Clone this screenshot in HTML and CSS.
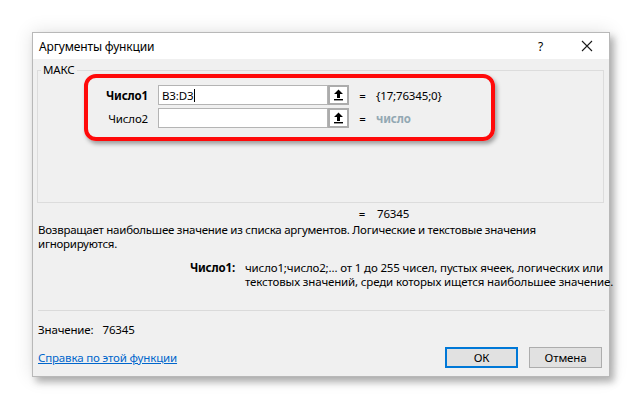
FILE: index.html
```html
<!DOCTYPE html>
<html lang="ru">
<head>
<meta charset="utf-8">
<title>Аргументы функции</title>
<link rel="stylesheet" href="styles.css">
</head>
<body>
<div class="stage">
  <div class="dialog">
    <div class="titlebar">
      <span class="title">Аргументы функции</span>
      <span class="help">?</span>
      <svg class="close" width="12" height="12" viewBox="0 0 12 12"><path d="M1 1L11 11M11 1L1 11" stroke="#1a1a1a" stroke-width="1.1" fill="none"/></svg>
    </div>
    <div class="content">
      <fieldset class="group">
        <legend>МАКС</legend>
        <div class="args">
          <div class="arg">
            <span class="arg-label bold">Число1</span>
            <span class="input"><span class="input-text">B3:D3</span><span class="caret"></span></span>
            <span class="ref-btn"><svg width="11" height="12" viewBox="0 0 11 12"><path d="M5.5 0.5L10 5H7V9H4V5H1Z" fill="#000"/><rect x="1" y="10" width="9" height="1.4" fill="#000"/></svg></span>
            <span class="eq">=</span>
            <span class="arg-value">{17;76345;0}</span>
          </div>
          <div class="arg">
            <span class="arg-label">Число2</span>
            <span class="input"></span>
            <span class="ref-btn"><svg width="11" height="12" viewBox="0 0 11 12"><path d="M5.5 0.5L10 5H7V9H4V5H1Z" fill="#000"/><rect x="1" y="10" width="9" height="1.4" fill="#000"/></svg></span>
            <span class="eq">=</span>
            <span class="arg-value hint">число</span>
          </div>
        </div>
        <div class="highlight"></div>
      </fieldset>
      <div class="result"><span class="eq">=</span><span class="result-num">76345</span></div>
      <p class="desc">Возвращает наибольшее значение из списка аргументов. Логические и текстовые значения<br>игнорируются.</p>
      <div class="argdesc">
        <span class="bold">Число1:</span>
        <span class="argdesc-text">число1;число2;... от 1 до 255 чисел, пустых ячеек, логических или<br>текстовых значений, среди которых ищется наибольшее значение.</span>
      </div>
      <div class="sep"></div>
      <div class="value">Значение:<span class="value-num">76345</span></div>
      <div class="footer">
        <a class="link" href="#">Справка по этой функции</a>
        <div class="buttons">
          <button class="btn btn-default">ОК</button>
          <button class="btn">Отмена</button>
        </div>
      </div>
    </div>
  </div>
</div>
</body>
</html>
```
FILE: styles.css
```css
* { box-sizing: border-box; }
html, body { margin: 0; padding: 0; background: #fff; }
body {
  width: 642px; height: 409px; overflow: hidden;
  font-family: "Noto Sans", "Liberation Sans", sans-serif;
  font-size: 11.5px; letter-spacing: -0.15px; color: #000;
}
.stage { padding: 32px 0 0 32px; }
.dialog {
  width: 578px; height: 345px;
  background: #f0f0f0;
  border: 1px solid #b8b8b8;
  box-shadow: 4px 5px 7px rgba(0,0,0,0.28), 0 0 18px rgba(0,0,0,0.12);
  display: flex; flex-direction: column;
}
.titlebar {
  height: 26px; background: #fff;
  display: flex; align-items: center;
  padding: 0 16px 0 6px;
}
.title { flex: 1; font-size: 12px; }
.help { width: 14px; margin-right: 29px; font-size: 12px; }
.close { display: block; }
.content { padding: 5px 6px 0 4px; position: relative; flex: 1; }
.bold { font-weight: bold; }
.group {
  margin: 0; padding: 0;
  border: 1px solid #dcdcdc;
  height: 139px; width: 567px;
  position: relative;
}
.group legend { padding: 0 2px; margin-left: 3px; line-height: 12px; }
.args { display: flex; flex-direction: column; gap: 3px; padding-top: 9px; }
.arg { display: flex; align-items: center; height: 20px; }
.arg-label { width: 120px; text-align: right; padding-right: 10px; }
.input {
  width: 170px; height: 20px; background: #fff;
  border: 1px solid #b4b4b4; display: flex; align-items: center; padding-left: 3px;
}
.caret { width: 1px; height: 13px; background: #000; margin-left: 1px; }
.ref-btn {
  width: 21px; height: 20px; background: #fff;
  border: 2px solid #acacac; display: flex; align-items: center; justify-content: center;
}
.ref-btn svg { display: block; }
.eq { width: 27px; text-align: center; }
.hint { color: #93a8b3; font-weight: bold; }
.highlight {
  position: absolute; left: 46px; top: -2px; width: 411px; height: 67px;
  border: 4px solid #ff0a0a; border-radius: 12px;
  box-shadow: 2px 3px 4px rgba(0,0,0,0.35);
  pointer-events: none;
}
.result { display: flex; padding-left: 318px; margin-top: 4px; height: 14px; line-height: 14px; }
.result .eq { width: 14px; }
.result-num { margin-left: 8px; }
.desc { margin: 2px 0 0 1px; line-height: 14px; white-space: nowrap; letter-spacing: -0.25px; }
.argdesc { display: flex; margin-top: 10px; line-height: 14px; }
.argdesc .bold { width: 208px; text-align: right; padding-right: 10px; flex: none; }
.argdesc-text { white-space: nowrap; }
.sep { height: 1px; background: #dadada; margin: 21px 0 0 1px; width: 567px; }
.value { margin: 12px 0 0 1px; line-height: 14px; }
.value-num { margin-left: 9px; }
.footer { display: flex; align-items: center; justify-content: space-between; margin-top: 10px; padding-left: 1px; }
.link { color: #0066cc; text-decoration: underline; }
.buttons { display: flex; gap: 11px; padding-right: 1px; }
.btn {
  width: 73px; height: 21px; font: inherit; letter-spacing: inherit; background: #e1e1e1;
  border: 1px solid #adadad; padding: 0; color: #000;
}
.btn-default { border: 2px solid #0078d7; }
```
